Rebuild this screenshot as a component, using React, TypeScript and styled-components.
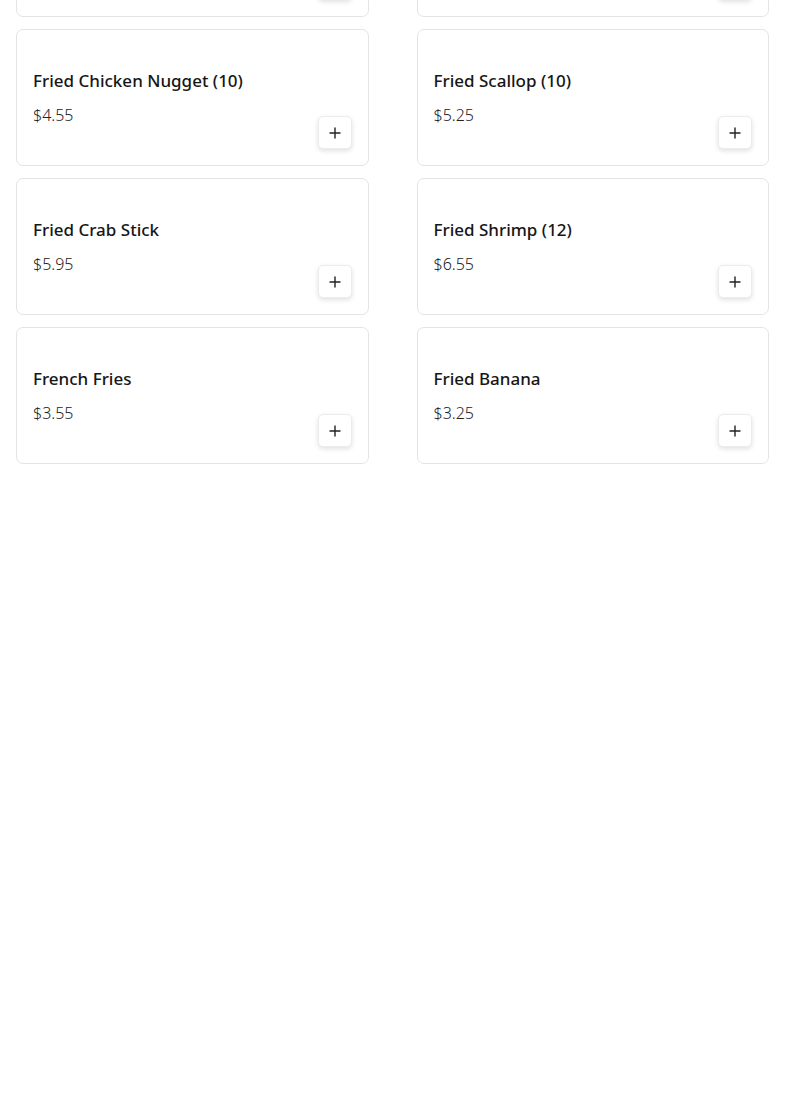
import React from 'react'
import styled, { createGlobalStyle } from 'styled-components'

type MenuItem = { id: number; name: string; price: number }

const items: MenuItem[] = [
  { id: 1, name: 'Fried Wonton (10)', price: 3.95 },
  { id: 2, name: 'Fried Dumpling (8)', price: 4.25 },
  { id: 3, name: 'Fried Chicken Nugget (10)', price: 4.55 },
  { id: 4, name: 'Fried Scallop (10)', price: 5.25 },
  { id: 5, name: 'Fried Crab Stick', price: 5.95 },
  { id: 6, name: 'Fried Shrimp (12)', price: 6.55 },
  { id: 7, name: 'French Fries', price: 3.55 },
  { id: 8, name: 'Fried Banana', price: 3.25 },
]

const GlobalStyle = createGlobalStyle`
  body {
    margin: 0;
    background: #fff;
    color: #1a1a1a;
    font-family: 'Noto Sans', 'Liberation Sans', sans-serif;
    overflow: hidden;
  }
`

const PlusIcon = () => (
  <svg width="12" height="12" viewBox="0 0 12 12" fill="none">
    <path d="M6 1v10M1 6h10" stroke="#222" strokeWidth="1.4" strokeLinecap="round" />
  </svg>
)

export default function App() {
  return (
    <>
      <GlobalStyle />
      <Grid>
        {items.map(item => (
          <Card key={item.id}>
            <Info>
              <Name>{item.name}</Name>
              <Price>${item.price.toFixed(2)}</Price>
            </Info>
            <AddButton aria-label={`Add ${item.name}`}>
              <PlusIcon />
            </AddButton>
          </Card>
        ))}
      </Grid>
    </>
  )
}

// the list is shown scrolled: the first row sits mostly above the window
const Grid = styled.div`
  display: grid;
  grid-template-columns: 1fr 1fr;
  column-gap: 48px;
  row-gap: 12px;
  padding: 0 16px;
  margin-top: -120px;
`

const Card = styled.div`
  display: flex;
  justify-content: space-between;
  align-items: flex-end;
  padding: 16px;
  border: 1px solid #e4e4e4;
  border-radius: 7px;
  background: #fff;
`

const Info = styled.div`
  display: flex;
  flex-direction: column;
  gap: 10px;
  padding: 23px 0 22px;
`

const Name = styled.div`
  font-size: 17px;
  line-height: 24px;
  font-weight: 500;
  color: #161616;
`

const Price = styled.div`
  font-size: 16px;
  line-height: 24px;
  font-weight: 300;
  color: #222;
`

const AddButton = styled.button`
  width: 34px;
  height: 33px;
  display: flex;
  align-items: center;
  justify-content: center;
  padding: 0;
  border: 1px solid #ececec;
  border-radius: 5px;
  background: #fff;
  box-shadow: 0 2px 5px rgba(0, 0, 0, 0.12);
  cursor: pointer;
`
